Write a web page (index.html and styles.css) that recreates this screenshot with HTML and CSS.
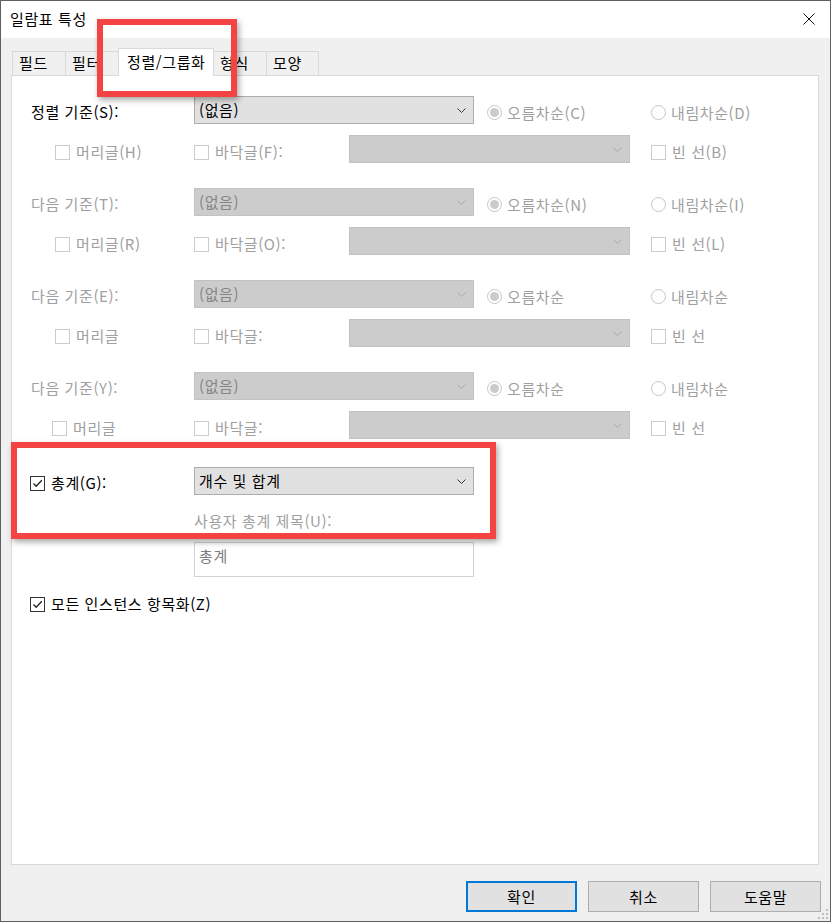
FILE: index.html
```html
<!DOCTYPE html>
<html lang="ko">
<head>
<meta charset="utf-8">
<title>일람표 특성</title>
<link rel="stylesheet" href="styles.css">
</head>
<body>
<div class="window">
  <div class="titlebar">
    <span class="title">일람표 특성</span>
    <svg class="close" width="12" height="12" viewBox="0 0 12 12"><path d="M0.5 0.5 L11.5 11.5 M11.5 0.5 L0.5 11.5" stroke="#111" stroke-width="1" fill="none"/></svg>
  </div>

  <div class="tabs">
    <div class="tab w54">필드</div>
    <div class="tab w54">필터</div>
    <div class="tab active">정렬/그룹화</div>
    <div class="tab w54">형식</div>
    <div class="tab w53">모양</div>
  </div>

  <div class="panel">
    <div class="group">
      <div class="row main">
        <span class="label">정렬 기준(S):</span>
        <div class="combo"><span>(없음)</span><svg class="chev" width="9" height="5" viewBox="0 0 9 5"><polyline points="0.5,0.5 4.5,4.5 8.5,0.5" fill="none" stroke="#333" stroke-width="1"/></svg></div>
        <span class="radio r1 dis"><span class="dot on"></span>오름차순(C)</span>
        <span class="radio dis"><span class="dot"></span>내림차순(D)</span>
      </div>
      <div class="row sub">
        <span class="chk c1 dis"><span class="box"></span>머리글(H)</span>
        <span class="chk c2 dis"><span class="box"></span>바닥글(F):</span>
        <div class="combo wide dis"><span></span><svg class="chev" width="9" height="5" viewBox="0 0 9 5"><polyline points="0.5,0.5 4.5,4.5 8.5,0.5" fill="none" stroke="#a8a8a8" stroke-width="1"/></svg></div>
        <span class="chk c3 dis"><span class="box"></span>빈 선(B)</span>
      </div>
    </div>

    <div class="group">
      <div class="row main">
        <span class="label dis">다음 기준(T):</span>
        <div class="combo dis"><span>(없음)</span><svg class="chev" width="9" height="5" viewBox="0 0 9 5"><polyline points="0.5,0.5 4.5,4.5 8.5,0.5" fill="none" stroke="#a8a8a8" stroke-width="1"/></svg></div>
        <span class="radio r1 dis"><span class="dot on"></span>오름차순(N)</span>
        <span class="radio dis"><span class="dot"></span>내림차순(I)</span>
      </div>
      <div class="row sub">
        <span class="chk c1 dis"><span class="box"></span>머리글(R)</span>
        <span class="chk c2 dis"><span class="box"></span>바닥글(O):</span>
        <div class="combo wide dis"><span></span><svg class="chev" width="9" height="5" viewBox="0 0 9 5"><polyline points="0.5,0.5 4.5,4.5 8.5,0.5" fill="none" stroke="#a8a8a8" stroke-width="1"/></svg></div>
        <span class="chk c3 dis"><span class="box"></span>빈 선(L)</span>
      </div>
    </div>

    <div class="group">
      <div class="row main">
        <span class="label dis">다음 기준(E):</span>
        <div class="combo dis"><span>(없음)</span><svg class="chev" width="9" height="5" viewBox="0 0 9 5"><polyline points="0.5,0.5 4.5,4.5 8.5,0.5" fill="none" stroke="#a8a8a8" stroke-width="1"/></svg></div>
        <span class="radio r1 dis"><span class="dot on"></span>오름차순</span>
        <span class="radio dis"><span class="dot"></span>내림차순</span>
      </div>
      <div class="row sub">
        <span class="chk c1 dis"><span class="box"></span>머리글</span>
        <span class="chk c2 dis"><span class="box"></span>바닥글:</span>
        <div class="combo wide dis"><span></span><svg class="chev" width="9" height="5" viewBox="0 0 9 5"><polyline points="0.5,0.5 4.5,4.5 8.5,0.5" fill="none" stroke="#a8a8a8" stroke-width="1"/></svg></div>
        <span class="chk c3 dis"><span class="box"></span>빈 선</span>
      </div>
    </div>

    <div class="group last">
      <div class="row main">
        <span class="label dis">다음 기준(Y):</span>
        <div class="combo dis"><span>(없음)</span><svg class="chev" width="9" height="5" viewBox="0 0 9 5"><polyline points="0.5,0.5 4.5,4.5 8.5,0.5" fill="none" stroke="#a8a8a8" stroke-width="1"/></svg></div>
        <span class="radio r1 dis"><span class="dot on"></span>오름차순</span>
        <span class="radio dis"><span class="dot"></span>내림차순</span>
      </div>
      <div class="row sub">
        <span class="chk c1 shifted dis"><span class="box"></span>머리글</span>
        <span class="chk c2 dis"><span class="box"></span>바닥글:</span>
        <div class="combo wide dis"><span></span><svg class="chev" width="9" height="5" viewBox="0 0 9 5"><polyline points="0.5,0.5 4.5,4.5 8.5,0.5" fill="none" stroke="#a8a8a8" stroke-width="1"/></svg></div>
        <span class="chk c3 dis"><span class="box"></span>빈 선</span>
      </div>
    </div>

    <div class="total">
      <div class="row total-row">
        <span class="chk ct"><span class="box checked"><svg width="13" height="13" viewBox="0 0 13 13"><polyline points="2.5,6.5 5.2,9.3 10.8,3.2" fill="none" stroke="#222" stroke-width="1.3"/></svg></span>총계(G):</span>
        <div class="combo"><span>개수 및 합계</span><svg class="chev" width="9" height="5" viewBox="0 0 9 5"><polyline points="0.5,0.5 4.5,4.5 8.5,0.5" fill="none" stroke="#333" stroke-width="1"/></svg></div>
      </div>
      <div class="caption dis">사용자 총계 제목(U):</div>
      <div class="textbox">총계</div>
      <div class="row all-row">
        <span class="chk ct"><span class="box checked"><svg width="13" height="13" viewBox="0 0 13 13"><polyline points="2.5,6.5 5.2,9.3 10.8,3.2" fill="none" stroke="#222" stroke-width="1.3"/></svg></span>모든 인스턴스 항목화(Z)</span>
      </div>
    </div>
  </div>

  <div class="footer">
    <div class="btn default">확인</div>
    <div class="btn">취소</div>
    <div class="btn">도움말</div>
  </div>

  <svg class="grip" width="12" height="12" viewBox="0 0 12 12">
    <rect x="9" y="1" width="2" height="2" fill="#bdbdbd"/>
    <rect x="5" y="5" width="2" height="2" fill="#bdbdbd"/>
    <rect x="9" y="5" width="2" height="2" fill="#bdbdbd"/>
    <rect x="1" y="9" width="2" height="2" fill="#bdbdbd"/>
    <rect x="5" y="9" width="2" height="2" fill="#bdbdbd"/>
    <rect x="9" y="9" width="2" height="2" fill="#bdbdbd"/>
  </svg>

  <div class="mark mark-tab"></div>
  <div class="mark mark-total"></div>
</div>
</body>
</html>
```

FILE: styles.css
```css
html, body {
  margin: 0;
  padding: 0;
  background: #f0f0f0;
}

body {
  font-family: "Noto Sans CJK KR", "Noto Sans", "Liberation Sans", sans-serif;
  font-size: 15px;
  letter-spacing: 0.6px;
  color: #000;
  line-height: 20px;
}

.window {
  position: relative;
  width: 831px;
  height: 922px;
  box-sizing: border-box;
  border: 1px solid #5f5f5f;
  background: #f0f0f0;
  display: flex;
  flex-direction: column;
}

.titlebar {
  height: 37px;
  box-sizing: border-box;
  background: #fff;
  display: flex;
  align-items: center;
  justify-content: space-between;
  padding: 0 15px 2px 9px;
}

.close {
  display: block;
}

/* tabs */
.tabs {
  position: relative;
  z-index: 1;
  display: flex;
  align-items: flex-end;
  height: 27px;
  margin: 10px 0 0 11px;
}

.tab {
  box-sizing: border-box;
  height: 24px;
  border: 1px solid #d9d9d9;
  border-bottom: none;
  margin-right: -1px;
  padding-left: 6px;
  line-height: 22px;
  background: #f0f0f0;
  white-space: nowrap;
}

.tab.w54 { width: 54px; }
.tab.w53 { width: 53px; }

.tab.active {
  width: 96px;
  height: 28px;
  margin-bottom: -1px;
  background: #fff;
  padding-left: 8px;
  line-height: 26px;
}

/* panel */
.panel {
  width: 808px;
  height: 790px;
  box-sizing: border-box;
  margin-left: 10px;
  background: #fff;
  border: 1px solid #d9d9d9;
  padding: 20px 0 0 19px;
}

.dis { color: #a0a0a0; }

.group {
  margin-bottom: 25px;
}

.group.last {
  margin-bottom: 0;
}

.row {
  display: flex;
  align-items: center;
  height: 28px;
  white-space: nowrap;
}

.sub {
  margin-top: 11px;
  padding-left: 24px;
}

.main .label {
  width: 163px;
  margin-top: 4px;
}

.combo {
  box-sizing: border-box;
  width: 280px;
  height: 28px;
  border: 1px solid #adadad;
  background: #e1e1e1;
  display: flex;
  align-items: center;
  justify-content: space-between;
  padding: 0 7px 0 4px;
}

.combo.wide {
  width: 281px;
}

.combo.dis {
  background: #cccccc;
  border-color: #c2c2c2;
  color: #858585;
}

.chev {
  display: block;
}

/* radios */
.radio {
  display: flex;
  align-items: center;
  width: 164px;
  margin-top: 5px;
}

.radio.r1 {
  margin-left: 13px;
}

.dot {
  box-sizing: border-box;
  width: 15px;
  height: 15px;
  border: 1px solid #c6c6c6;
  border-radius: 50%;
  background: #fff;
  margin-right: 5px;
  display: flex;
  align-items: center;
  justify-content: center;
}

.dot.on::after {
  content: "";
  width: 9px;
  height: 9px;
  border-radius: 50%;
  background: #cbcbcb;
}

/* checkboxes */
.chk {
  display: flex;
  align-items: center;
}

.sub .chk {
  margin-top: 6px;
}

.box {
  box-sizing: border-box;
  width: 15px;
  height: 15px;
  border: 1px solid #cccccc;
  background: #fff;
  margin-right: 6px;
  display: flex;
  align-items: center;
  justify-content: center;
}

.box.checked {
  border-color: #333;
}

.box svg {
  display: block;
}

.c1 { width: 139px; }
.c1.shifted { width: 142px; margin-left: -3px; }
.c2 { width: 155px; }
.c3 { margin-left: 21px; }

/* total section */
.total {
  margin-top: 28px;
}

.total .ct {
  width: 164px;
  margin-left: -1px;
}

.total-row .ct {
  margin-top: 4px;
}

.caption {
  margin: 16px 0 0 163px;
  height: 20px;
}

.textbox {
  box-sizing: border-box;
  width: 280px;
  height: 35px;
  margin: 11px 0 0 163px;
  border: 1px solid #d2d2d2;
  background: #fff;
  color: #7d7d7d;
  padding: 3px 0 0 4px;
}

.all-row {
  margin-top: 13px;
}

/* footer buttons */
.footer {
  display: flex;
  justify-content: flex-end;
  gap: 11px;
  padding: 16px 9px 0 0;
}

.btn {
  box-sizing: border-box;
  width: 111px;
  height: 31px;
  border: 1px solid #adadad;
  background: #e1e1e1;
  display: flex;
  align-items: center;
  justify-content: center;
}

.btn.default {
  border: 2px solid #0078d7;
}

.grip {
  position: absolute;
  right: 1px;
  bottom: 1px;
}

/* red annotation boxes */
.mark {
  position: absolute;
  box-sizing: border-box;
  border: 6px solid #f44343;
  box-shadow: 2px 3px 6px rgba(0, 0, 0, 0.35);
  z-index: 5;
}

.mark-tab {
  left: 96px;
  top: 18px;
  width: 140px;
  height: 78px;
}

.mark-total {
  left: 10px;
  top: 441px;
  width: 485px;
  height: 97px;
}
```
